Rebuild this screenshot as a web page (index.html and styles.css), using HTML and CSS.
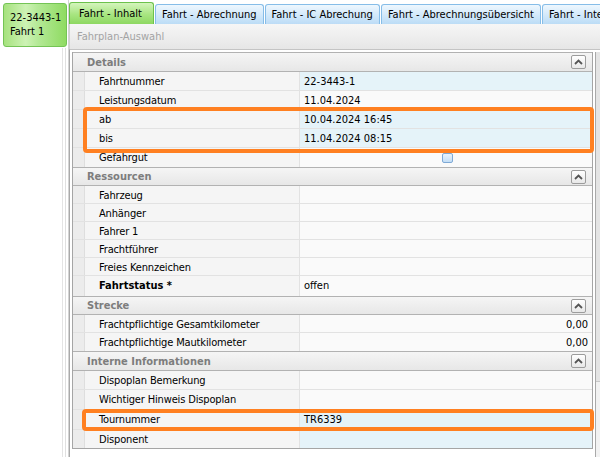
FILE: index.html
```html
<!DOCTYPE html>
<html>
<head>
<meta charset="utf-8">
<link rel="stylesheet" href="styles.css">
</head>
<body>
<div class="app">
  <aside class="sidebar">
    <div class="tile">22-3443-1<br>Fahrt 1</div>
    <div class="side-lines"></div>
  </aside>
  <main class="main">
    <nav class="tabs">
      <div class="tab active">Fahrt - Inhalt</div>
      <div class="tab">Fahrt - Abrechnung</div>
      <div class="tab">Fahrt - IC Abrechung</div>
      <div class="tab">Fahrt - Abrechnungsübersicht</div>
      <div class="tab">Fahrt - Interne Informationen</div>
    </nav>
    <div class="toolbar">Fahrplan-Auswahl</div>
    <div class="frame">
      <div class="grid">
        <section class="sec sec-details">
          <div class="sec-head"><span>Details</span><span class="collapse"><svg width="9" height="6" viewBox="0 0 9 6"><path d="M1 5 L4.5 1.5 L8 5" fill="none" stroke="#555" stroke-width="1.8"/></svg></span></div>
          <div class="row"><i></i><span class="lbl">Fahrtnummer</span><span class="val blue">22-3443-1</span></div>
          <div class="row"><i></i><span class="lbl">Leistungsdatum</span><span class="val">11.04.2024</span></div>
          <div class="row"><i></i><span class="lbl">ab</span><span class="val blue">10.04.2024 16:45</span></div>
          <div class="row"><i></i><span class="lbl">bis</span><span class="val blue">11.04.2024 08:15</span></div>
          <div class="row"><i></i><span class="lbl">Gefahrgut</span><span class="val"><span class="check"></span></span></div>
        </section>
        <section class="sec">
          <div class="sec-head"><span>Ressourcen</span><span class="collapse"><svg width="9" height="6" viewBox="0 0 9 6"><path d="M1 5 L4.5 1.5 L8 5" fill="none" stroke="#555" stroke-width="1.8"/></svg></span></div>
          <div class="row"><i></i><span class="lbl">Fahrzeug</span><span class="val"></span></div>
          <div class="row"><i></i><span class="lbl">Anhänger</span><span class="val"></span></div>
          <div class="row"><i></i><span class="lbl">Fahrer 1</span><span class="val"></span></div>
          <div class="row"><i></i><span class="lbl">Frachtführer</span><span class="val"></span></div>
          <div class="row"><i></i><span class="lbl">Freies Kennzeichen</span><span class="val"></span></div>
          <div class="row tall"><i></i><span class="lbl bold">Fahrtstatus *</span><span class="val">offen</span></div>
        </section>
        <section class="sec">
          <div class="sec-head"><span>Strecke</span><span class="collapse"><svg width="9" height="6" viewBox="0 0 9 6"><path d="M1 5 L4.5 1.5 L8 5" fill="none" stroke="#555" stroke-width="1.8"/></svg></span></div>
          <div class="row"><i></i><span class="lbl">Frachtpflichtige Gesamtkilometer</span><span class="val num">0,00</span></div>
          <div class="row"><i></i><span class="lbl">Frachtpflichtige Mautkilometer</span><span class="val num">0,00</span></div>
        </section>
        <section class="sec sec-intern">
          <div class="sec-head"><span>Interne Informationen</span><span class="collapse"><svg width="9" height="6" viewBox="0 0 9 6"><path d="M1 5 L4.5 1.5 L8 5" fill="none" stroke="#555" stroke-width="1.8"/></svg></span></div>
          <div class="row mid"><i></i><span class="lbl">Dispoplan Bemerkung</span><span class="val"></span></div>
          <div class="row tall"><i></i><span class="lbl">Wichtiger Hinweis Dispoplan</span><span class="val"></span></div>
          <div class="row tall"><i></i><span class="lbl">Tournummer</span><span class="val blue">TR6339</span></div>
          <div class="row"><i></i><span class="lbl">Disponent</span><span class="val blue"></span></div>
        </section>
      </div>
      <div class="scroll"><div class="thumb"></div></div>
    </div>
  </main>
</div>
<div class="mark mark-1"></div>
<div class="mark mark-2"></div>
</body>
</html>
```

FILE: styles.css
```css
* { box-sizing: border-box; }
html, body { margin: 0; padding: 0; }
body {
  width: 600px;
  height: 457px;
  overflow: hidden;
  background: #ffffff;
  font-family: "DejaVu Sans Condensed", "DejaVu Sans", sans-serif;
  font-stretch: condensed;
  font-size: 11px;
  color: #000;
  position: relative;
}
.app { display: flex; height: 457px; }

.sidebar {
  width: 69px;
  flex: none;
  position: relative;
  padding: 3px 0 0 3px;
  border-right: 1px solid #d4d4d4;
}
.tile {
  width: 64px;
  height: 44px;
  border: 1px solid #74c455;
  border-radius: 3px;
  padding: 7px 0 0 6px;
  line-height: 14px;
  background: linear-gradient(90deg, #a6e27e 0%, #cdf2b4 35%, #b4e996 55%, #8fdb62 100%);
}
.side-lines {
  position: absolute;
  left: 62px;
  top: 48px;
  bottom: 0;
  width: 4px;
  border-left: 1px solid #e4e4e4;
  border-right: 1px solid #e0e0e0;
}

.main { flex: 1; display: flex; flex-direction: column; min-width: 0; }

.tabs {
  height: 24px;
  display: flex;
  align-items: flex-end;
  gap: 1px;
  white-space: nowrap;
  overflow: hidden;
}
.tab {
  flex: none;
  height: 20px;
  padding: 3px 6px 0 6px;
  border: 1px solid #86bde8;
  border-bottom: none;
  border-radius: 3px 3px 0 0;
  background: linear-gradient(#eef7fe, #cfe7fa 60%, #bcdcf6);
}
.tab.active {
  height: 22px;
  padding: 4px 11px 0 9px;
  border-color: #6cc24c;
  background: linear-gradient(#d4f4bc, #a7e580 55%, #8ed862);
}

.toolbar {
  height: 25px;
  padding: 6px 0 0 7px;
  color: #a3a3a3;
  background: linear-gradient(#f6f6f6, #e6e6e6);
  border-left: 1px solid #d0d0d0;
}

.frame {
  flex: 1;
  display: flex;
  border-left: 1px solid #a9a9a9;
  border-top: 1px solid #c4c4c4;
  padding: 2px 0 0 2px;
  background: #fff;
}
.grid {
  width: 522px;
  border: 1px solid #a5a5a5;
  border-top: none;
  align-self: flex-start;
}
.scroll {
  width: 5px;
  margin-left: 2px;
  border-left: 1px solid #a9a9a9;
  background: #f2f2f2;
}
.thumb { height: 330px; background: #e4e4e4; border-bottom: 1px solid #c8c8c8; }

.sec-head {
  height: 19px;
  display: flex;
  align-items: center;
  justify-content: space-between;
  padding: 0 6px 0 14px;
  background: linear-gradient(#f5f5f5, #e7e7e7);
  border-top: 1px solid #b2b2b2;
  border-bottom: 1px solid #b2b2b2;
  color: #7d7d7d;
  font-weight: bold;
}
.sec-details .sec-head { height: 20px; }
.sec-intern .sec-head { height: 20px; }
.collapse {
  width: 15px;
  height: 14px;
  border: 1px solid #9c9c9c;
  border-radius: 2px;
  background: linear-gradient(#ffffff, #e8e8e8);
  display: flex;
  align-items: center;
  justify-content: center;
}

.row {
  height: 18px;
  display: grid;
  grid-template-columns: 12px 215px 1fr;
  border-bottom: 1px solid #e2e2e2;
}
.row:last-child { border-bottom: none; }
.sec-details .row { height: 19px; }
.row.mid { height: 19px; }
.row.tall { height: 20px; }
.row i {
  background: #ececec;
  border-right: 1px solid #dedede;
}
.lbl {
  background: #f5f5f5;
  border-right: 1px solid #e2e2e2;
  padding: 3px 0 0 14px;
  white-space: nowrap;
  letter-spacing: -0.15px;
}
.lbl.bold { font-weight: bold; letter-spacing: 0; }
.val {
  background: #fafafa;
  padding: 3px 0 0 4px;
  position: relative;
  white-space: nowrap;
}
.val.blue { background: #e5f3f9; }
.val.num { text-align: right; padding-right: 4px; }
.check {
  position: absolute;
  left: 142px;
  top: 5px;
  width: 11px;
  height: 10px;
  border: 1px solid #7ea9d6;
  border-radius: 2px;
  background: linear-gradient(#e8f3fd, #c4def6);
}

.mark {
  position: absolute;
  border: 4px solid #ff8021;
  border-radius: 4px;
}
.mark-1 { left: 83px; top: 107px; width: 511px; height: 46px; }
.mark-2 { left: 82px; top: 409px; width: 512px; height: 22px; }
```
